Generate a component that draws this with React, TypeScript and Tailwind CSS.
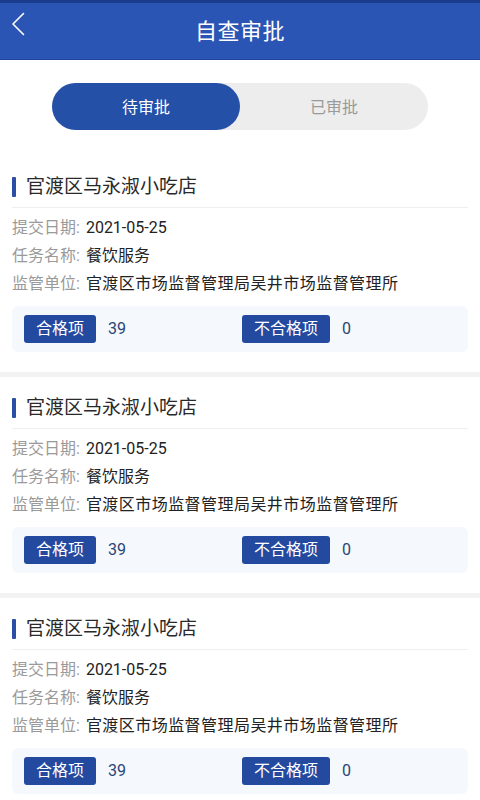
import { useState } from 'react';

type Record = {
  id: number;
  shop: string;
  date: string;
  task: string;
  unit: string;
  passed: number;
  failed: number;
};

const records: Record[] = [1, 2, 3].map((id) => ({
  id,
  shop: '官渡区马永淑小吃店',
  date: '2021-05-25',
  task: '餐饮服务',
  unit: '官渡区市场监督管理局吴井市场监督管理所',
  passed: 39,
  failed: 0,
}));

const font = { fontFamily: 'Roboto, "Noto Sans CJK SC", "Liberation Sans", sans-serif' };

function InfoRow({ label, value, wide }: { label: string; value: string; wide?: boolean }) {
  return (
    <div className="flex items-center h-[28px] text-[16px] whitespace-nowrap">
      <span className="text-[#9a9a9a]">{label}:</span>
      <span className={`ml-[6px] text-[#222] ${wide ? 'tracking-[0.45px]' : ''}`}>{value}</span>
    </div>
  );
}

function RecordCard({ record }: { record: Record }) {
  return (
    <div>
      <div className="px-3">
        {/* Title */}
        <div className="flex items-center pt-[20px] pb-[9px] border-b border-[#efefef]">
          <span className="w-[4px] h-[20px] bg-[#2a4fa3] rounded-[1px]" />
          <span className="ml-[10px] text-[19px] leading-[22px] text-[#2a2a2a]">{record.shop}</span>
        </div>

        <div className="mt-[6px]">
          <InfoRow label="提交日期" value={record.date} />
          <InfoRow label="任务名称" value={record.task} />
          <InfoRow label="监管单位" value={record.unit} wide />
        </div>

        {/* Stats */}
        <div className="mt-[8px] h-[46px] rounded-md bg-[#f5f8fd] flex items-center pl-3 pr-[2px]">
          <div className="flex items-center w-[218px]">
            <span className="h-[28px] px-[12px] flex items-center rounded-[3px] bg-[#234a9f] text-white text-[16px]">
              合格项
            </span>
            <span className="ml-3 text-[16px] text-[#2a4574]">{record.passed}</span>
          </div>
          <div className="flex items-center">
            <span className="h-[28px] px-[12px] flex items-center rounded-[3px] bg-[#234a9f] text-white text-[16px]">
              不合格项
            </span>
            <span className="ml-3 text-[16px] text-[#2a4574]">{record.failed}</span>
          </div>
        </div>
      </div>
      <div className="mt-[20px] h-[5px] bg-[#f2f2f2]" />
    </div>
  );
}

export default function App() {
  const [tab, setTab] = useState<'pending' | 'done'>('pending');

  return (
    <div className="w-[480px] h-[800px] overflow-hidden bg-white" style={font}>
      {/* Header */}
      <div className="h-[60px] bg-[#2a55b4] border-t-[3px] border-t-[#1b3b8c] border-b border-b-[#1f4396] relative flex items-center justify-center">
        <button className="absolute left-[10px] top-[9px] w-[16px] h-[24px] flex items-center justify-center">
          <svg width="14" height="24" viewBox="0 0 14 24" fill="none">
            <path d="M12.5 1.5 L2 12 L12.5 22.5" stroke="white" strokeWidth="1.6" strokeLinecap="round" strokeLinejoin="round" />
          </svg>
        </button>
        <h1 className="text-[22px] text-white tracking-[0.5px]">自查审批</h1>
      </div>

      {/* Tabs */}
      <div className="pt-[23px] flex justify-center">
        <div className="w-[376px] h-[47px] rounded-full bg-[#ededed] flex">
          <button
            onClick={() => setTab('pending')}
            className={`w-[188px] h-full rounded-full text-[16px] pt-[2px] ${
              tab === 'pending' ? 'bg-[#2550a8] text-white' : 'text-[#9a9a9a]'
            }`}
          >
            待审批
          </button>
          <button
            onClick={() => setTab('done')}
            className={`flex-1 h-full rounded-full text-[16px] pt-[2px] ${
              tab === 'done' ? 'bg-[#2550a8] text-white' : 'text-[#9a9a9a]'
            }`}
          >
            已审批
          </button>
        </div>
      </div>

      {/* List */}
      <div className="mt-[26px]">
        {records.map((r) => (
          <RecordCard key={r.id} record={r} />
        ))}
      </div>
    </div>
  );
}
